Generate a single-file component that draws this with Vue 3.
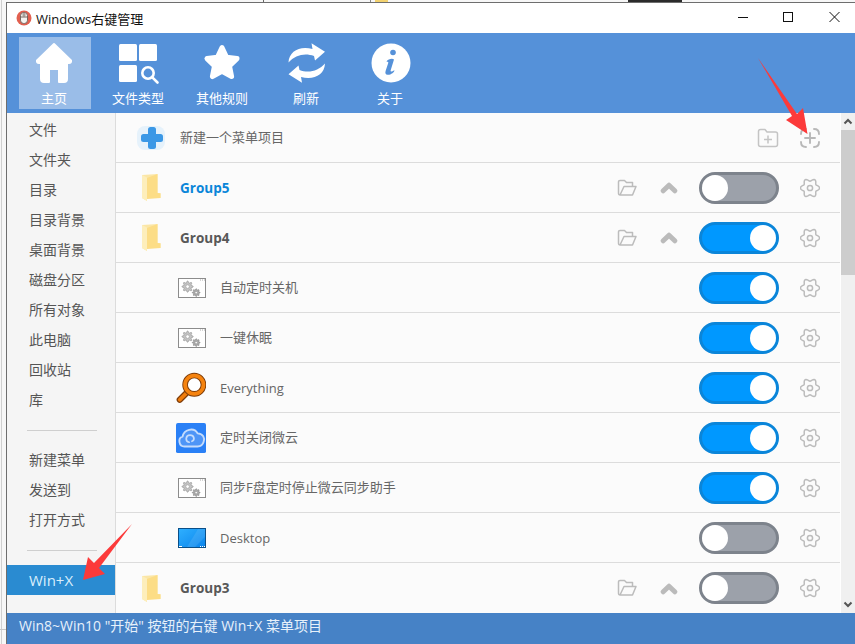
<script setup>
const sideTop = ['文件','文件夹','目录','目录背景','桌面背景','磁盘分区','所有对象','此电脑','回收站','库']
const sideMid = ['新建菜单','发送到','打开方式']
const rows = [
  { type:'group', label:'Group5', on:false, accent:true },
  { type:'group', label:'Group4', on:true },
  { type:'child', icon:'cog', label:'自动定时关机', on:true },
  { type:'child', icon:'cog', label:'一键休眠', on:true },
  { type:'child', icon:'search', label:'Everything', on:true },
  { type:'child', icon:'cloud', label:'定时关闭微云', on:true },
  { type:'child', icon:'cog', label:'同步F盘定时停止微云同步助手', on:true },
  { type:'child', icon:'desktop', label:'Desktop', on:false },
  { type:'group', label:'Group3', on:false },
]
const isCjk = (s) => /[^\x00-\x7f]/.test(s)
function cog(cx, cy, base, amp, n = 6) {
  let d = ''
  for (let i = 0; i <= 72; i++) {
    const t = (i / 72) * Math.PI * 2
    const r = base + amp * Math.cos(n * t)
    d += (i ? 'L' : 'M') + (cx + r * Math.cos(t)).toFixed(2) + ' ' + (cy + r * Math.sin(t)).toFixed(2)
  }
  return d + 'Z'
}
const gear = cog(10, 10, 8.2, 1.4)
const small1 = cog(9.6, 8.6, 4.6, 1, 8)
const small2 = cog(18.2, 14.6, 3.2, 0.7, 8)
</script>

<template>
  <div class="screen">
    <i class="bg bg-a"></i><i class="bg bg-b"></i><i class="bg bg-c"></i><i class="bg bg-d"></i>
    <i class="bg bg-e"></i><i class="bg bg-f"></i>
    <div class="window">
      <header class="titlebar">
        <svg class="appicon" width="16" height="16" viewBox="0 0 16 16">
          <circle cx="8" cy="8" r="7.5" fill="#e2604f"/>
          <rect x="4.5" y="2.5" width="7" height="11" rx="3.2" fill="#f4f4f0" stroke="#77665f" stroke-width="1"/>
          <path d="M4.5 7h7M8 2.5v4.5" stroke="#77665f" stroke-width="1" fill="none"/>
          <rect x="6.5" y="3.5" width="3" height="3" fill="#a8a39c"/>
        </svg>
        <span class="title">Windows右键管理</span>
        <div class="winbtns">
          <svg width="11" height="12" viewBox="0 0 11 12"><path d="M1 6.5h10" stroke="#111" stroke-width="1"/></svg>
          <svg width="11" height="12" viewBox="0 0 11 12"><rect x=".5" y="1.5" width="9" height="9" fill="none" stroke="#111" stroke-width="1"/></svg>
          <svg width="11" height="12" viewBox="0 0 11 12"><path d="M.5 1l10 10M10.5 1l-10 10" stroke="#111" stroke-width="1"/></svg>
        </div>
      </header>

      <nav class="toolbar">
        <div class="tool active">
          <svg width="44" height="44" viewBox="0 0 44 44">
            <path d="M22 3 L39 19.5 Q39.5 22 37 22 H35 V38 Q35 41 32 41 H27 V28 H17 V41 H12 Q9 41 9 38 V22 H7 Q4.5 22 5 19.5 Z" fill="#fff" stroke="#fff" stroke-width="2" stroke-linejoin="round"/>
          </svg>
          <span>主页</span>
        </div>
        <div class="tool">
          <svg width="44" height="44" viewBox="0 0 44 44">
            <rect x="3" y="3" width="18" height="17" rx="1.5" fill="#fff"/>
            <rect x="23" y="3" width="18" height="17" rx="1.5" fill="#fff"/>
            <rect x="3" y="24" width="18" height="17" rx="1.5" fill="#fff"/>
            <circle cx="32" cy="32" r="5.7" fill="none" stroke="#fff" stroke-width="2.6"/>
            <path d="M36.3 36.3 L41.5 41.5" stroke="#fff" stroke-width="2.6" stroke-linecap="round"/>
          </svg>
          <span>文件类型</span>
        </div>
        <div class="tool">
          <svg width="44" height="44" viewBox="0 0 44 44">
            <path d="M22 6.5 L26.6 16.3 L37 17.6 L29.5 25 L31.6 35.6 L22 30.4 L12.4 35.6 L14.5 25 L7 17.6 L17.4 16.3 Z" fill="#fff" stroke="#fff" stroke-width="5" stroke-linejoin="round"/>
          </svg>
          <span>其他规则</span>
        </div>
        <div class="tool">
          <svg width="44" height="44" viewBox="0 0 44 44">
            <path d="M4.5 21.5 C5 10 16 4.5 28.5 8 L27.5 2.3 L41 10.7 L31 19.5 L30 15 C21 11.5 11 14 4.5 21.5 Z" fill="#fff"/>
            <path d="M41 22.5 C40.5 34 29.5 39.5 17 36 L18 41.7 L4.5 33.3 L14.5 24.5 L15.5 29 C24.5 32.5 34.5 30 41 22.5 Z" fill="#fff"/>
          </svg>
          <span>刷新</span>
        </div>
        <div class="tool">
          <svg width="44" height="44" viewBox="0 0 44 44">
            <circle cx="23" cy="22" r="19.5" fill="#fff"/>
            <circle cx="25" cy="11.5" r="2.8" fill="#5591d9"/>
            <path d="M18.5 20.5 C20 18 24.5 17 26 18.5 L22.6 29.5 C22.4 31 23.6 31 26.4 29.2 C26.6 31 23 34 19.6 33.8 C17.4 33.6 17 32 17.6 30 L20.4 21.4 C19.8 20.7 19 20.7 18.5 20.5 Z" fill="#5591d9"/>
          </svg>
          <span>关于</span>
        </div>
      </nav>

      <div class="body">
        <aside class="side">
          <div v-for="s in sideTop" :key="s" class="sitem">{{ s }}</div>
          <div class="sdiv"></div>
          <div v-for="s in sideMid" :key="s" class="sitem">{{ s }}</div>
          <div class="sdiv"></div>
          <div class="sitem current">Win+X</div>
        </aside>

        <main class="list">
          <div class="row">
            <span class="ico">
              <svg width="30" height="30" viewBox="0 0 30 30">
                <rect x="1" y="3" width="28" height="24" rx="8" fill="#e6f2fb"/>
                <rect x="12" y="4" width="8" height="22" rx="2.5" fill="#3b98e6"/>
                <rect x="5" y="11" width="22" height="8" rx="2.5" fill="#3b98e6"/>
              </svg>
            </span>
            <span class="label cjk">新建一个菜单项目</span>
            <span class="act push">
              <svg width="22" height="20" viewBox="0 0 22 20" fill="none" stroke="#c4c4c4" stroke-width="1.5" stroke-linejoin="round">
                <path d="M1.5 3.5 Q1.5 1.5 3.5 1.5 H8 L10 4 H18.5 Q20.5 4 20.5 6 V16.5 Q20.5 18.5 18.5 18.5 H3.5 Q1.5 18.5 1.5 16.5 Z"/>
                <path d="M11 7.5v8M7 11.5h8"/>
              </svg>
            </span>
            <span class="act">
              <svg width="20" height="20" viewBox="0 0 20 20" fill="none" stroke="#b8b8b8" stroke-width="1.9" stroke-linecap="round">
                <path d="M1 6 Q1 1 6 1M14 1 Q19 1 19 6M19 14 Q19 19 14 19M6 19 Q1 19 1 14"/>
                <path d="M10 5v10M5 10h10"/>
              </svg>
            </span>
          </div>

          <div v-for="r in rows" :key="r.label" class="row" :class="{ child: r.type === 'child' }">
            <span class="ico">
              <svg v-if="r.type === 'group'" width="19" height="27" viewBox="0 0 19 27">
                <path d="M0 1 L15.5 0 V19 L18.5 19 V24 L5 24 V27 L0 24 Z" fill="#fbe6a6"/>
                <path d="M5 4 L15.5 0 V19 L18.5 19.5 V24 L5 25 Z" fill="#fcdd86"/>
                <path d="M0 1 L5 3.5 V27 L0 24 Z" fill="#fdeebb"/>
              </svg>
              <svg v-else-if="r.icon === 'cog'" class="nudge" width="28" height="20" viewBox="0 0 28 20">
                <rect x=".5" y=".5" width="27" height="19" fill="#fff" stroke="#8c8c8c"/>
                <path d="M22 2h1M24 2h1M26 2h1" stroke="#aaa"/>
                <path :d="small1" fill="#c4c4c4" stroke="#9a9a9a" stroke-width=".8"/>
                <circle cx="9.6" cy="8.6" r="1.8" fill="#fff" stroke="#9a9a9a" stroke-width=".6"/>
                <path :d="small2" fill="#adadad" stroke="#8a8a8a" stroke-width=".8"/>
                <circle cx="18.2" cy="14.6" r="1.2" fill="#fff" stroke="#8a8a8a" stroke-width=".5"/>
              </svg>
              <svg v-else-if="r.icon === 'search'" width="32" height="32" viewBox="0 0 32 32">
                <path d="M4 28.5 L12 20.5" stroke="#7e3c08" stroke-width="6.6" stroke-linecap="round"/>
                <path d="M4 28.5 L12 20.5" stroke="#f07d0c" stroke-width="4" stroke-linecap="round"/>
                <circle cx="19.5" cy="12.5" r="9.8" fill="#fff" stroke="#7e3c08" stroke-width="6"/>
                <circle cx="19.5" cy="12.5" r="9.8" fill="none" stroke="#f5830f" stroke-width="4"/>
              </svg>
              <svg v-else-if="r.icon === 'cloud'" width="32" height="32" viewBox="0 0 32 32">
                <rect width="32" height="32" rx="2" fill="#2a80f6"/>
                <path d="M9 25 C3 25 1.5 16 7 14.5 C8.5 7 19 4 23 11 C29 11.5 31 16 29.5 20 C28.5 23.5 26 25 23 25 Z" fill="#4e95f7" stroke="#c5dcfc" stroke-width="2" stroke-linejoin="round"/>
                <path d="M14 20.5 C9.5 19.5 10 13 15 13 C19.5 13 20.5 18 17 19.5" fill="none" stroke="#c5dcfc" stroke-width="1.8" stroke-linecap="round"/>
              </svg>
              <svg v-else class="nudge" width="28" height="20" viewBox="0 0 28 20">
                <defs>
                  <linearGradient id="desk" x1="0" y1="0" x2="1" y2="1"><stop offset="0" stop-color="#2fb0ff"/><stop offset="1" stop-color="#0a84ec"/></linearGradient>
                </defs>
                <rect x=".5" y=".5" width="27" height="19" fill="url(#desk)" stroke="#0a4f88"/>
                <path d="M9 19 L20 1 H27 V9 L17 19 Z" fill="#fff" opacity=".1"/>
                <path d="M1 18.5h3M22 18.5h1M24 18.5h1M26 18.5h1" stroke="#fff"/>
              </svg>
            </span>
            <span class="label" :class="{ bold: r.type === 'group', accent: r.accent, cjk: isCjk(r.label) }">{{ r.label }}</span>
            <template v-if="r.type === 'group'">
              <span class="act push">
                <svg width="20" height="18" viewBox="0 0 20 18" fill="none" stroke="#bcbcbc" stroke-width="1.5" stroke-linejoin="round">
                  <path d="M3 16 H15.5 L19 7.5 H7 L3 16 Q1.5 16 1.5 14 V2.8 Q1.5 1.5 3 1.5 H7.5 L9.5 3.5 H15.5 V7.5"/>
                </svg>
              </span>
              <span class="act">
                <svg width="18" height="13" viewBox="0 0 18 13">
                  <path d="M3.2 9.8 L9 4.2 L14.8 9.8" fill="none" stroke="#bbb" stroke-width="5" stroke-linecap="round" stroke-linejoin="round"/>
                </svg>
              </span>
            </template>
            <span class="toggle" :class="{ on: r.on, push: r.type !== 'group' }"><b class="knob"></b></span>
            <span class="act">
              <svg width="20" height="20" viewBox="0 0 20 20" fill="none" stroke="#bcbcbc" stroke-width="1.5">
                <path :d="gear"/>
                <circle cx="10" cy="10" r="2.6"/>
              </svg>
            </span>
          </div>
        </main>

        <div class="scroll">
          <div class="sbtn"><svg width="10" height="7" viewBox="0 0 10 7"><path d="M1.5 5.5 L5 2 L8.5 5.5" fill="none" stroke="#555" stroke-width="2"/></svg></div>
          <div class="thumb"></div>
          <div class="strack"></div>
          <div class="sbtn"><svg width="10" height="7" viewBox="0 0 10 7"><path d="M1.5 1.5 L5 5 L8.5 1.5" fill="none" stroke="#555" stroke-width="2"/></svg></div>
        </div>
      </div>

      <footer class="status">Win8~Win10 "开始" 按钮的右键 Win+X 菜单项目</footer>
    </div>

    <svg class="marks" width="855" height="644" viewBox="0 0 855 644">
      <polygon points="758,58 797,114 803,108 807.5,134 786,120 792,116" fill="#fc3a3a"/>
      <polygon points="132,524 99,568 105,574 83,580 88,557 94,563" fill="#fc3a3a"/>
    </svg>
  </div>
</template>

<style>
html, body { margin: 0; overflow: hidden; background: #fff; }
</style>

<style scoped>
.screen {
  position: relative;
  width: 855px;
  height: 644px;
  overflow: hidden;
  background: #f7f7f7;
  font-family: "Open Sans", "Noto Sans CJK SC", sans-serif;
}
.bg { position: absolute; display: block; }
.bg-a { left: 263px; top: 0; width: 1px; height: 2px; background: #666; }
.bg-b { left: 370px; top: 0; width: 1px; height: 2px; background: #888; }
.bg-c { left: 375px; top: 0; width: 13px; height: 2px; background: #f3d270; }
.bg-d { left: 628px; top: 0; width: 54px; height: 2px; background: #2b2b2b; }
.bg-e { left: 1px; top: 0; width: 1px; height: 644px; background: #d0d0d0; }
.bg-f { left: 0; top: 629px; width: 6px; height: 1px; background: #c8c8c8; }

.window {
  position: absolute;
  left: 6px;
  top: 2px;
  width: 849px;
  height: 642px;
  box-sizing: border-box;
  border-left: 1px solid #6e6e6e;
  border-top: 1px solid #6e6e6e;
  display: flex;
  flex-direction: column;
  background: #fff;
}
.titlebar {
  height: 30px;
  flex: none;
  display: flex;
  align-items: center;
  padding-left: 9px;
  background: #fff;
}
.appicon { flex: none; }
.title {
  margin-left: 4px;
  font-size: 13px;
  color: #111;
}
.winbtns {
  margin-left: auto;
  display: flex;
  gap: 35px;
  padding-right: 15px;
  margin-top: -3px;
}
.toolbar {
  height: 80px;
  flex: none;
  background: #5591d9;
  box-sizing: border-box;
  padding: 4px 12px;
  display: flex;
  gap: 12px;
}
.tool {
  width: 72px;
  height: 72px;
  box-sizing: border-box;
  padding-right: 2px;
  flex: none;
  display: flex;
  flex-direction: column;
  align-items: center;
  color: #fff;
  font-size: 13px;
  white-space: nowrap;
}
.tool svg { margin-top: 4px; flex: none; }
.tool span { line-height: 18px; margin-top: 4px; }
.tool.active { background: #9abde8; }

.body { flex: 1; min-height: 0; display: flex; }
.side {
  width: 108px;
  flex: none;
  background: #f5f5f5;
  border-right: 1px solid #dcdcdc;
  padding-top: 2px;
}
.sitem {
  height: 30px;
  line-height: 30px;
  padding-left: 22px;
  font-size: 14px;
  color: #555;
}
.sdiv {
  height: 1px;
  margin: 15px 18px 14px 20px;
  background: #cfcfcf;
}
.sitem.current { background: #2a8bd1; color: #d9eefc; font-size: 15px; }

.list { width: 724px; flex: none; background: #fbfbfb; }
.row {
  height: 50px;
  box-sizing: border-box;
  border-bottom: 1px solid #dcdcdc;
  display: flex;
  align-items: center;
  padding: 0 9px 0 20px;
}
.row:last-child { border-bottom: 0; }
.row.child { padding-left: 60px; }
.ico {
  width: 30px;
  height: 32px;
  flex: none;
  display: flex;
  align-items: center;
  justify-content: center;
}
.nudge { margin-left: 2px; }
.label { margin-left: 14px; font-size: 13px; color: #666; white-space: nowrap; }
.label.cjk { margin-bottom: 2px; }
.label.bold { font-weight: 700; font-size: 13.5px; color: #585858; }
.label.accent { color: #0a86d9; }
.act {
  width: 42px;
  flex: none;
  display: flex;
  justify-content: center;
  align-items: center;
}
.push { margin-left: auto; }
.toggle {
  width: 80px;
  height: 32px;
  margin: 0 10px 0 9px;
  box-sizing: border-box;
  flex: none;
  border-radius: 16px;
  border: 3px solid #7d838c;
  background: #9ca1aa;
  display: flex;
  align-items: center;
}
.toggle.push { margin-left: auto; }
.toggle.on { border-color: #0a85d9; background: #0098ff; justify-content: flex-end; }
.knob {
  width: 26px;
  height: 26px;
  border-radius: 50%;
  background: #fff;
}

.scroll {
  width: 14px;
  margin-left: 1px;
  flex: none;
  background: #f0f0f0;
  display: flex;
  flex-direction: column;
}
.sbtn { height: 17px; flex: none; display: flex; align-items: center; justify-content: center; }
.thumb { height: 145px; flex: none; background: #cdcdcd; }
.strack { flex: 1; }

.status {
  height: 31px;
  flex: none;
  line-height: 26px;
  background: #4682c6;
  color: #e6f1fb;
  font-size: 14px;
  padding-left: 12px;
}
.marks { position: absolute; left: 0; top: 0; pointer-events: none; }
</style>
